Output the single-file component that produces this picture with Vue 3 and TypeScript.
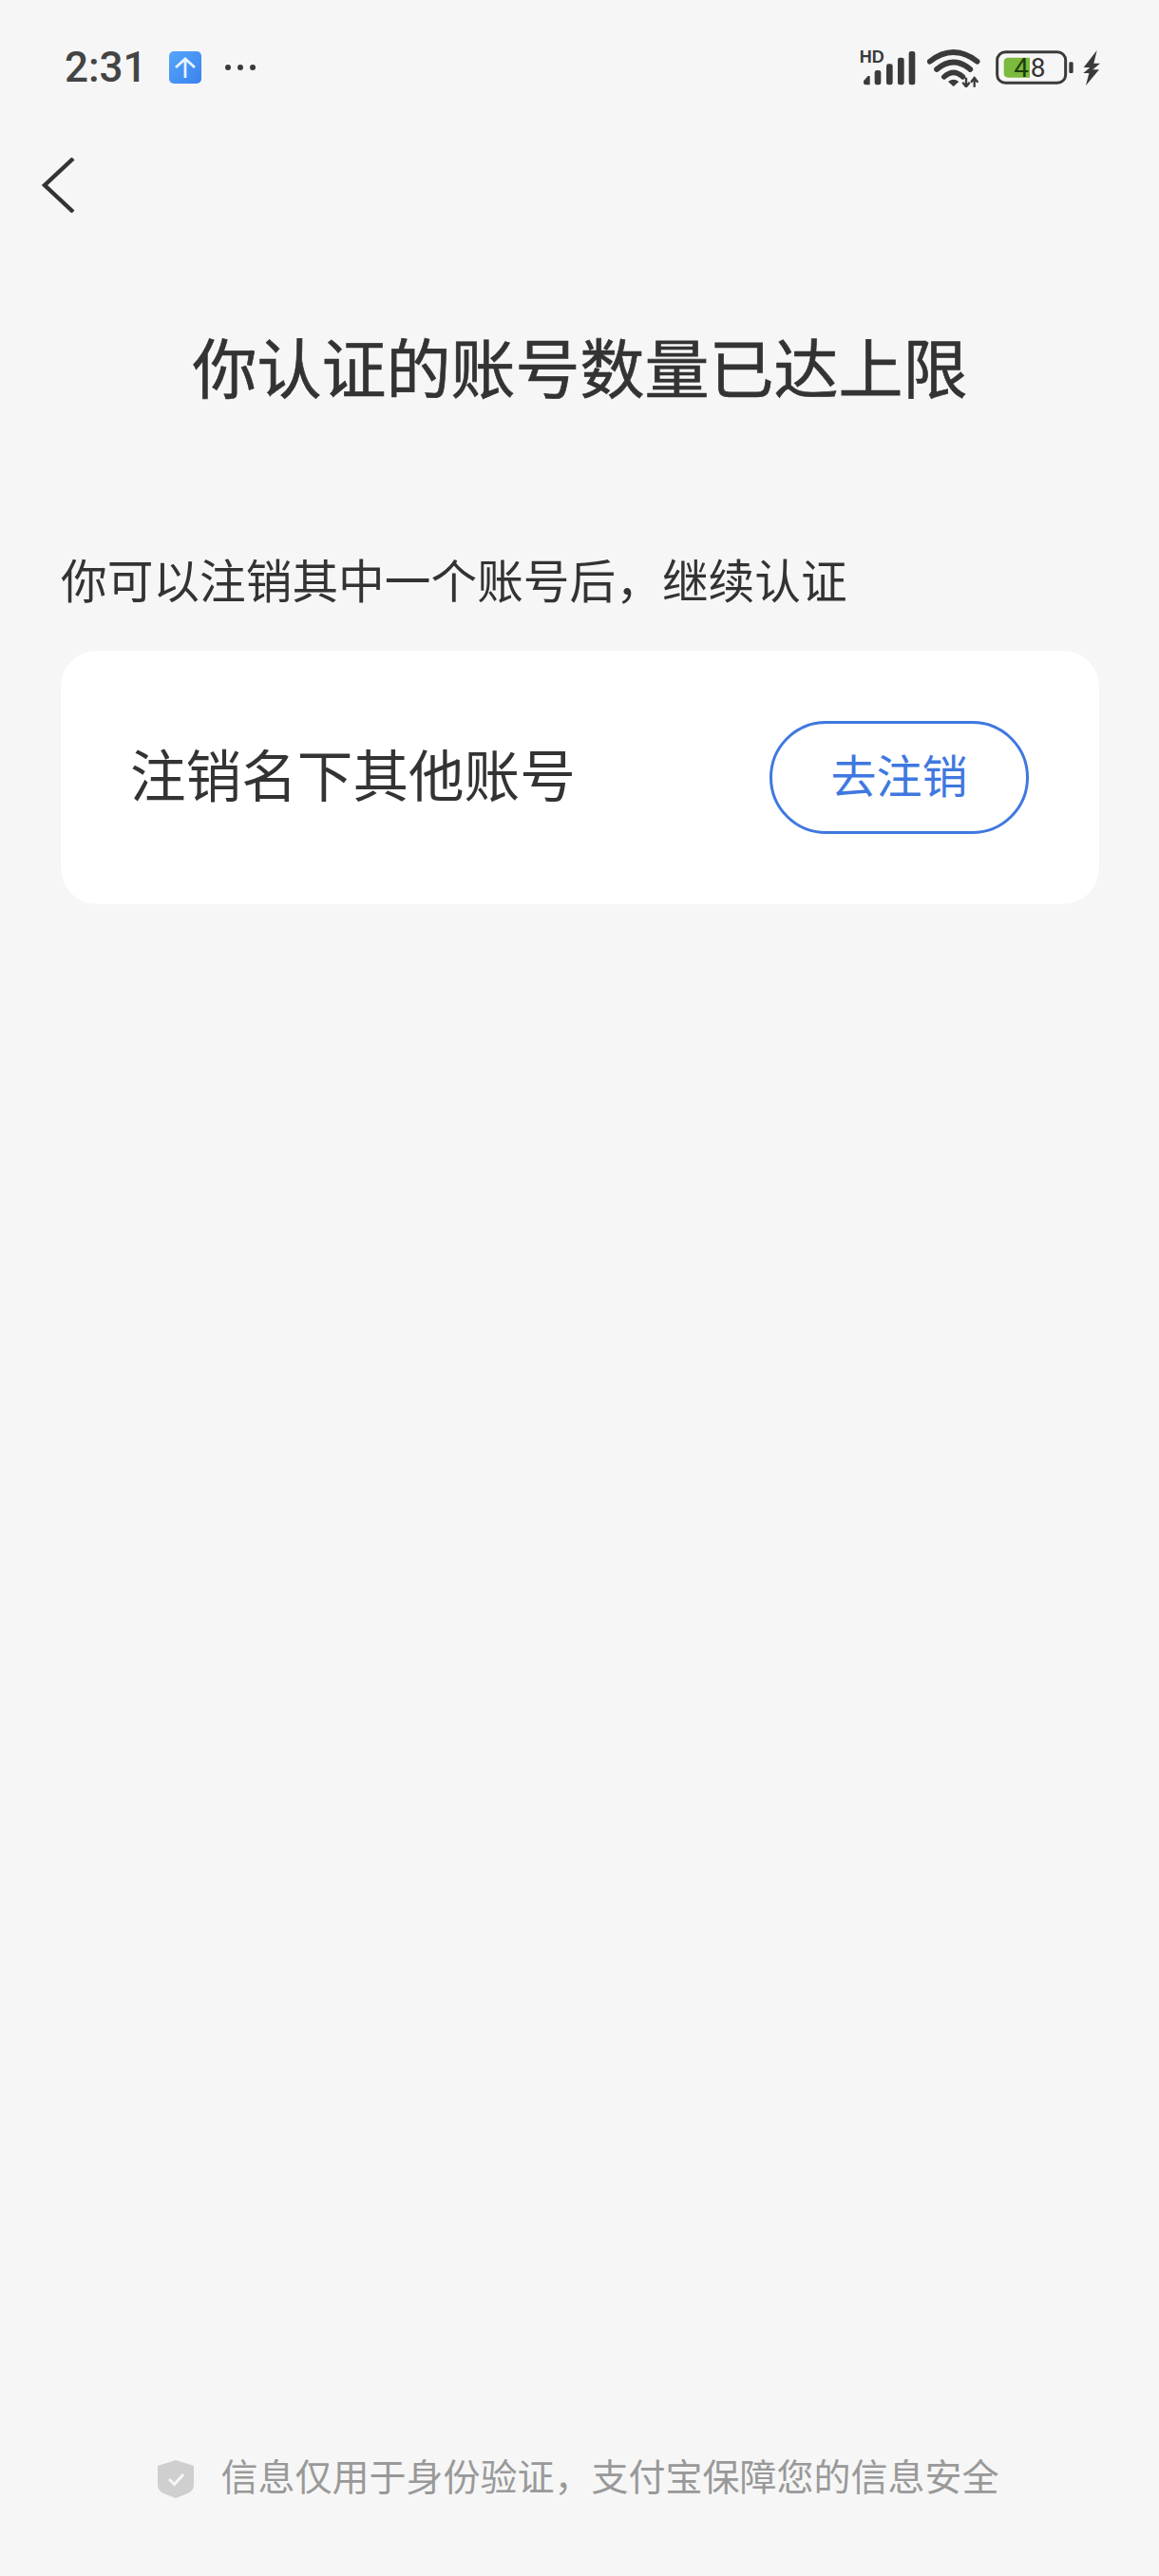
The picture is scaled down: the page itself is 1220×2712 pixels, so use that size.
<script setup lang="ts">
const title = '你认证的账号数量已达上限'
const hint = '你可以注销其中一个账号后，继续认证'
const rowLabel = '注销名下其他账号'
const action = '去注销'
const footer = '信息仅用于身份验证，支付宝保障您的信息安全'
</script>

<template>
  <div class="page">
    <header class="status">
      <div class="status-left">
        <span class="time">2:31</span>
        <svg class="upload" width="34" height="34" viewBox="0 0 34 34">
          <defs>
            <linearGradient id="up" x1="0" y1="0" x2="1" y2="1">
              <stop offset="0" stop-color="#55a5fb" />
              <stop offset="1" stop-color="#3a82ee" />
            </linearGradient>
          </defs>
          <rect width="34" height="34" rx="5" fill="url(#up)" />
          <path d="M17 28V8M7 17 17 8l10 9" fill="none" stroke="#e8f2ff" stroke-width="2.800" />
        </svg>
        <svg class="dots" width="34" height="8" viewBox="0 0 34 8">
          <circle cx="4" cy="4" r="3" fill="#3a3a3a" />
          <circle cx="17" cy="4" r="3" fill="#3a3a3a" />
          <circle cx="30" cy="4" r="3" fill="#3a3a3a" />
        </svg>
      </div>
      <div class="status-right">
        <svg width="64" height="42" viewBox="70 60 192 126">
          <text x="72" y="108" class="hd">HD</text>
          <path d="M85 166l14-16h6v28H92q-7 0-7-7z" fill="#3a3a3a" />
          <rect x="120" y="132" width="20" height="46" rx="7" fill="#3a3a3a" />
          <rect x="157" y="112" width="20" height="66" rx="7" fill="#3a3a3a" />
          <rect x="193" y="92" width="20" height="86" rx="7" fill="#3a3a3a" />
          <rect x="228" y="72" width="20" height="106" rx="7" fill="#3a3a3a" />
        </svg>
        <svg class="wifi" width="56" height="42" viewBox="292 60 168 126">
          <path d="M300 104Q375 46 450 104" fill="none" stroke="#3a3a3a" stroke-width="17" stroke-linecap="round" />
          <path d="M322 129Q375 84 428 129" fill="none" stroke="#3a3a3a" stroke-width="17" stroke-linecap="round" />
          <path d="M345 153Q375 125 405 153" fill="none" stroke="#3a3a3a" stroke-width="16" stroke-linecap="round" />
          <path d="M358 168Q375 154 392 168L375 183Z" fill="#3a3a3a" />
          <path d="M415 155v28M404 170l11 14 11-14" fill="none" stroke="#3a3a3a" stroke-width="7" />
          <path d="M441 185v-28M430 170l11-14 11 14" fill="none" stroke="#3a3a3a" stroke-width="7" />
        </svg>
        <svg class="battery" width="82" height="38" viewBox="0 0 246 114">
          <rect x="5" y="8" width="216" height="98" rx="26" fill="none" stroke="#3a3a3a" stroke-width="9" />
          <path d="M26 40q0-14 14-14h68v63H40q-14 0-14-14z" fill="#7cb93f" />
          <text x="58" y="88" class="pct pct-in">4</text>
          <text x="110" y="88" class="pct">8</text>
          <rect x="232" y="40" width="13" height="35" rx="4" fill="#3a3a3a" />
        </svg>
        <svg class="bolt" width="20" height="37" viewBox="780 68 60 111">
          <path d="M824 68 782 122h20l-21 18h18l-10 39 42-50h-20l23-20h-20z" fill="#3a3a3a" />
        </svg>
      </div>
    </header>

    <nav class="nav">
      <svg width="36" height="58" viewBox="0 0 36 58">
        <path d="M34 1 4 29l30 28" fill="none" stroke="#333" stroke-width="4.400" />
      </svg>
    </nav>

    <main class="main">
      <h1 class="title">{{ title }}</h1>
      <p class="hint">{{ hint }}</p>
      <section class="card">
        <span class="label">{{ rowLabel }}</span>
        <button class="btn" type="button">{{ action }}</button>
      </section>
    </main>

    <footer class="foot">
      <svg class="shield" width="38" height="40" viewBox="0 0 38 40">
        <path d="M19 0 38 6v20q0 6-6 9L19 40 6 35q-6-3-6-9V6z" fill="#cfcfcf" />
        <path d="M12 20l5.500 5.500L27 15" fill="none" stroke="#f6f6f6" stroke-width="3" />
      </svg>
      <span>{{ footer }}</span>
    </footer>
  </div>
</template>

<style>
html,
body {
  margin: 0;
  background: #f6f6f6;
}
</style>

<style scoped>
.page {
  min-height: 100vh;
  display: flex;
  flex-direction: column;
  box-sizing: border-box;
  background: #f6f6f6;
  font-family: "Noto Sans CJK SC", "Noto Sans", sans-serif;
  color: #333;
}
.status {
  height: 142px;
  display: flex;
  align-items: center;
  justify-content: space-between;
  padding: 0 60px 0 68px;
}
.status-left,
.status-right {
  display: flex;
  align-items: center;
}
.time {
  font-family: Roboto, "Noto Sans", sans-serif;
  font-size: 44px;
  font-weight: 500;
  color: #444;
  line-height: 50px;
  margin-right: 23px;
}
.dots {
  margin-left: 24px;
}
.wifi {
  margin-left: 8px;
}
.battery {
  margin-left: 16px;
}
.bolt {
  margin-left: 10px;
}
.hd {
  font-family: "Liberation Sans", sans-serif;
  font-size: 54px;
  font-weight: 700;
  fill: #3a3a3a;
}
.pct {
  font-family: Roboto, sans-serif;
  font-size: 84px;
  fill: #333;
}
.pct-in {
  fill: #1c3d0b;
}
.nav {
  height: 106px;
  display: flex;
  align-items: center;
  padding-left: 43px;
}
.main {
  padding: 0 63px 0 64px;
  display: flex;
  flex-direction: column;
}
.title {
  margin: 97px 0 0;
  font-size: 68px;
  line-height: 80px;
  font-weight: 400;
  -webkit-text-stroke: 0.7px #333;
  text-align: center;
  color: #333;
}
.hint {
  margin: 154px 0 0;
  font-size: 48.700px;
  line-height: 60px;
  color: #333;
}
.card {
  margin-top: 46px;
  height: 267px;
  box-sizing: border-box;
  padding: 0 74px 0 74px;
  background: #fff;
  border-radius: 38px;
  display: flex;
  align-items: center;
  justify-content: space-between;
}
.label {
  font-size: 58.600px;
  line-height: 70px;
  padding-bottom: 10px;
  color: #333;
  margin-left: -1px;
}
.btn {
  width: 273px;
  height: 119px;
  margin-bottom: 1px;
  border: 3px solid #3f78e0;
  border-radius: 60px;
  background: #fff;
  color: #3f78e0;
  font-family: inherit;
  font-size: 48px;
  padding: 0 0 8px;
}
.foot {
  margin-top: auto;
  height: 48px;
  padding: 0 2px 83px 0;
  display: flex;
  align-items: center;
  justify-content: center;
  gap: 28px;
  font-size: 39px;
  line-height: 48px;
  color: #999;
}
.shield {
  margin-top: 10px;
}
</style>
